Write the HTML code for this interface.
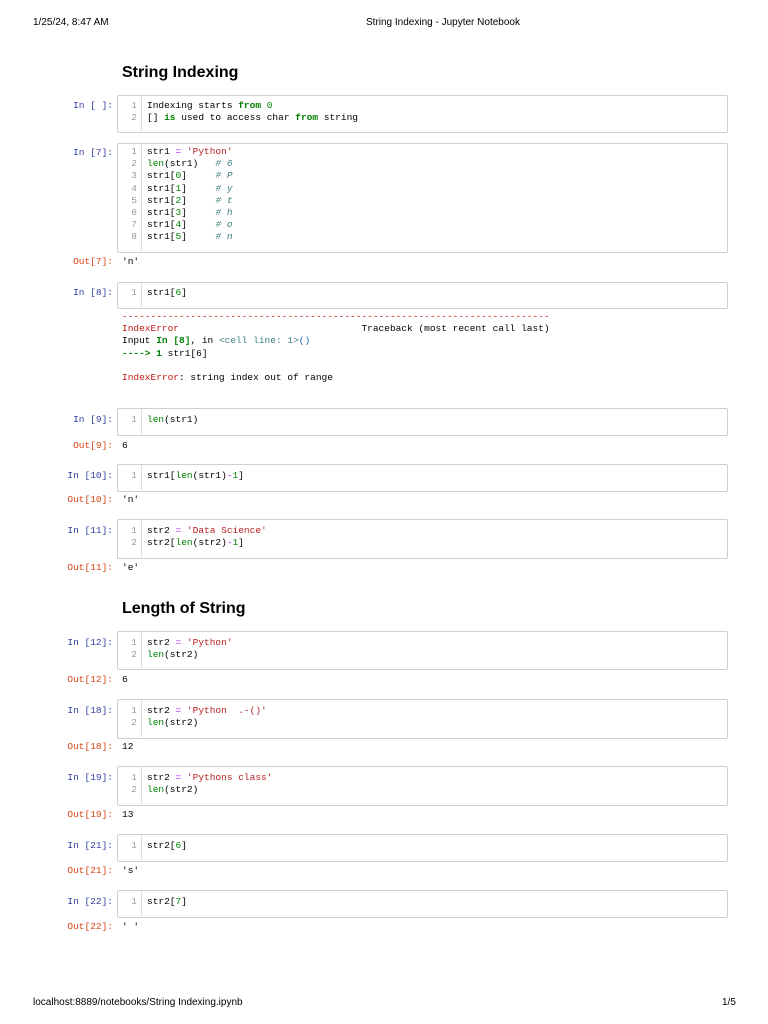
<!DOCTYPE html>
<html><head><meta charset="utf-8"><style>
body{margin:0;width:768px;height:1024px;background:#fff;position:relative;overflow:hidden;font-family:"Liberation Sans",sans-serif}
.a{position:absolute;white-space:pre}
.m{font-family:"Liberation Mono",monospace;font-size:9.5px;line-height:12.2px}
.p{position:absolute;right:655px;color:#303F9F;font-family:"Liberation Mono",monospace;font-size:9.5px;white-space:pre}
.o{position:absolute;right:655px;color:#D84315;font-family:"Liberation Mono",monospace;font-size:9.5px;white-space:pre}
.box{position:absolute;left:117px;width:609px;border:1px solid #cfcfcf;border-radius:2px;background:#fff}
.g{position:absolute;left:141px;width:1px;background:#ddd}
.ln{position:absolute;left:120px;width:17px;text-align:right;color:#999;font-family:"Liberation Mono",monospace;font-size:9.5px;line-height:12.2px;white-space:pre}
.k{color:#008000;font-weight:bold}.b{color:#008000}.s{color:#BA2121}.c{color:#408080;font-style:italic}.op{color:#AA22FF}.r{color:#C41A16}.bl{color:#1565C0}
h2{position:absolute;left:122px;margin:0;font-size:16px;font-weight:bold}
.ov{position:absolute;left:122px;font-family:"Liberation Mono",monospace;font-size:9.5px;white-space:pre}
</style></head><body>
<div class="a" style="left:33px;top:17px;font-size:10px">1/25/24, 8:47 AM</div>
<div class="a" style="left:366px;top:17px;font-size:10px">String Indexing - Jupyter Notebook</div>
<h2 style="top:64px">String Indexing</h2>

<div class="p" style="top:100px">In [ ]:</div>
<div class="box" style="top:95px;height:36px"></div><div class="g" style="top:96px;height:35px"></div>
<div class="ln" style="top:100px">1
2</div>
<div class="a m" style="left:147px;top:100px">Indexing starts <span class="k">from</span> <span class="b">0</span>
[] <span class="k">is</span> used to access char <span class="k">from</span> string</div>

<div class="p" style="top:147px">In [7]:</div>
<div class="box" style="top:143px;height:108px"></div><div class="g" style="top:144px;height:107px"></div>
<div class="ln" style="top:146px">1
2
3
4
5
6
7
8</div>
<div class="a m" style="left:147px;top:146px">str1 <span class="op">=</span> <span class="s">'Python'</span>
<span class="b">len</span>(str1)   <span class="c"># 6</span>
str1[<span class="b">0</span>]     <span class="c"># P</span>
str1[<span class="b">1</span>]     <span class="c"># y</span>
str1[<span class="b">2</span>]     <span class="c"># t</span>
str1[<span class="b">3</span>]     <span class="c"># h</span>
str1[<span class="b">4</span>]     <span class="c"># o</span>
str1[<span class="b">5</span>]     <span class="c"># n</span></div>
<div class="o" style="top:256px">Out[7]:</div><div class="ov" style="top:256px">'n'</div>

<div class="p" style="top:287px">In [8]:</div>
<div class="box" style="top:282px;height:25px"></div><div class="g" style="top:283px;height:24px"></div>
<div class="ln" style="top:287px">1</div>
<div class="a m" style="left:147px;top:287px">str1[<span class="b">6</span>]</div>
<div class="a m" style="left:122px;top:311px"><span class="r">---------------------------------------------------------------------------</span>
<span class="r">IndexError</span>                                Traceback (most recent call last)
Input <span class="k">In [8]</span>, in <span style="color:#408080">&lt;cell line: 1&gt;</span><span class="bl">()</span>
<span class="k">----&gt; 1</span> str1[6]

<span class="r">IndexError</span>: string index out of range</div>

<div class="p" style="top:414px">In [9]:</div>
<div class="box" style="top:408px;height:26px"></div><div class="g" style="top:409px;height:25px"></div>
<div class="ln" style="top:414px">1</div>
<div class="a m" style="left:147px;top:414px"><span class="b">len</span>(str1)</div>
<div class="o" style="top:440px">Out[9]:</div><div class="ov" style="top:440px">6</div>

<div class="p" style="top:470px">In [10]:</div>
<div class="box" style="top:464px;height:26px"></div><div class="g" style="top:465px;height:25px"></div>
<div class="ln" style="top:470px">1</div>
<div class="a m" style="left:147px;top:470px">str1[<span class="b">len</span>(str1)<span class="op">-</span><span class="b">1</span>]</div>
<div class="o" style="top:494px">Out[10]:</div><div class="ov" style="top:494px">'n'</div>

<div class="p" style="top:525px">In [11]:</div>
<div class="box" style="top:519px;height:38px"></div><div class="g" style="top:520px;height:37px"></div>
<div class="ln" style="top:525px">1
2</div>
<div class="a m" style="left:147px;top:525px">str2 <span class="op">=</span> <span class="s">'Data Science'</span>
str2[<span class="b">len</span>(str2)<span class="op">-</span><span class="b">1</span>]</div>
<div class="o" style="top:562px">Out[11]:</div><div class="ov" style="top:562px">'e'</div>

<h2 style="top:600px">Length of String</h2>

<div class="p" style="top:637px">In [12]:</div>
<div class="box" style="top:631px;height:37px"></div><div class="g" style="top:632px;height:36px"></div>
<div class="ln" style="top:637px">1
2</div>
<div class="a m" style="left:147px;top:637px">str2 <span class="op">=</span> <span class="s">'Python'</span>
<span class="b">len</span>(str2)</div>
<div class="o" style="top:674px">Out[12]:</div><div class="ov" style="top:674px">6</div>

<div class="p" style="top:705px">In [18]:</div>
<div class="box" style="top:699px;height:38px"></div><div class="g" style="top:700px;height:37px"></div>
<div class="ln" style="top:705px">1
2</div>
<div class="a m" style="left:147px;top:705px">str2 <span class="op">=</span> <span class="s">'Python  .-()'</span>
<span class="b">len</span>(str2)</div>
<div class="o" style="top:741px">Out[18]:</div><div class="ov" style="top:741px">12</div>

<div class="p" style="top:772px">In [19]:</div>
<div class="box" style="top:766px;height:38px"></div><div class="g" style="top:767px;height:37px"></div>
<div class="ln" style="top:772px">1
2</div>
<div class="a m" style="left:147px;top:772px">str2 <span class="op">=</span> <span class="s">'Pythons class'</span>
<span class="b">len</span>(str2)</div>
<div class="o" style="top:809px">Out[19]:</div><div class="ov" style="top:809px">13</div>

<div class="p" style="top:840px">In [21]:</div>
<div class="box" style="top:834px;height:26px"></div><div class="g" style="top:835px;height:25px"></div>
<div class="ln" style="top:840px">1</div>
<div class="a m" style="left:147px;top:840px">str2[<span class="b">6</span>]</div>
<div class="o" style="top:865px">Out[21]:</div><div class="ov" style="top:865px">'s'</div>

<div class="p" style="top:896px">In [22]:</div>
<div class="box" style="top:890px;height:26px"></div><div class="g" style="top:891px;height:25px"></div>
<div class="ln" style="top:896px">1</div>
<div class="a m" style="left:147px;top:896px">str2[<span class="b">7</span>]</div>
<div class="o" style="top:921px">Out[22]:</div><div class="ov" style="top:921px">' '</div>

<div class="a" style="left:33px;top:997px;font-size:10px">localhost:8889/notebooks/String Indexing.ipynb</div>
<div class="a" style="left:722px;top:997px;font-size:10px">1/5</div>
</body></html>
